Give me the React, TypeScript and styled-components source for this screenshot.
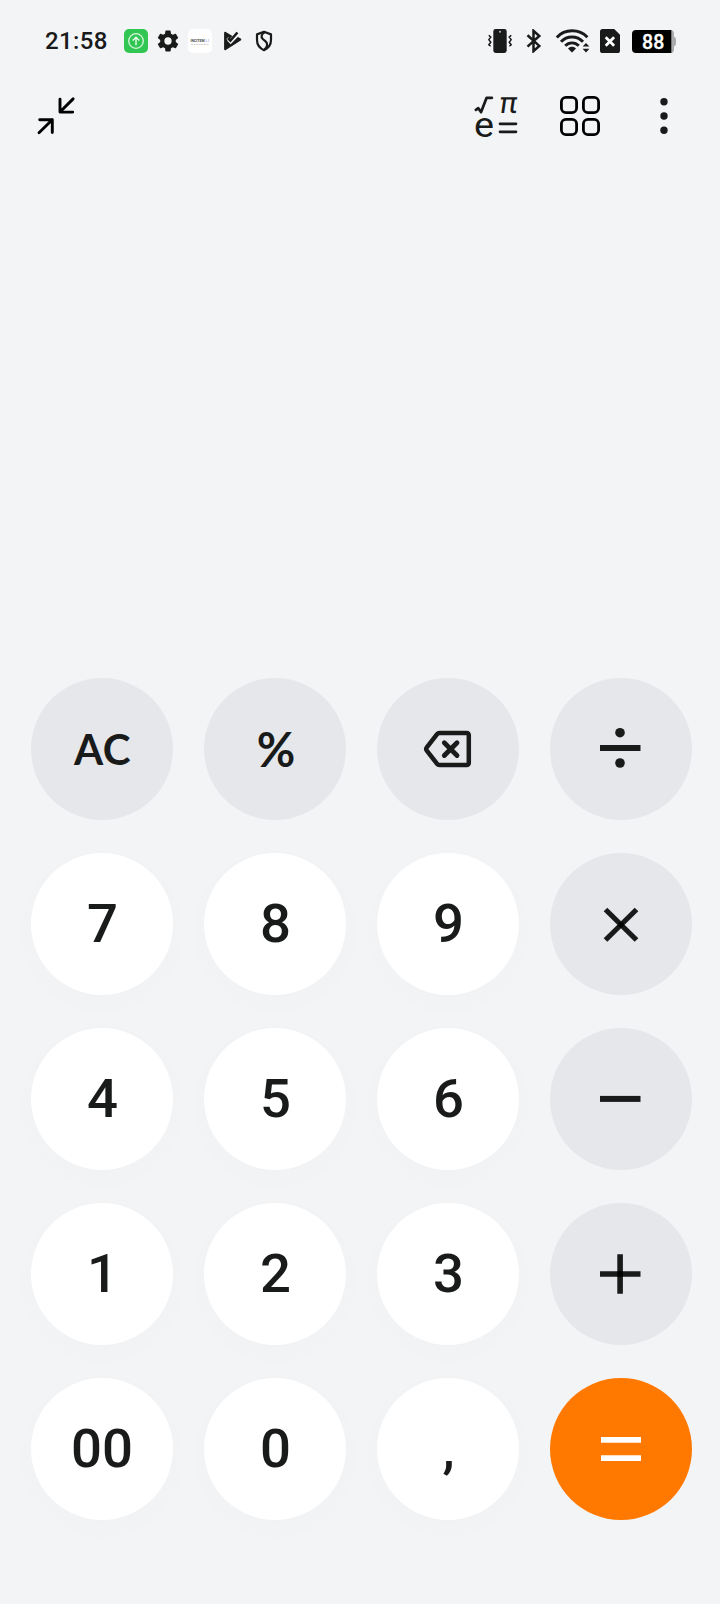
import React from 'react';
import styled, { createGlobalStyle } from 'styled-components';

const GlobalStyle = createGlobalStyle`
  * { box-sizing: border-box; }
  body { margin: 0; background: #f3f4f6; }
`;

const INK = '#191a1a';

const Screen = styled.main`
  display: flex;
  flex-direction: column;
  width: 720px;
  height: 1604px;
  background: #f3f4f6;
  font-family: Roboto, 'Liberation Sans', sans-serif;
  color: ${INK};
`;

const StatusBar = styled.header`
  display: flex;
  align-items: center;
  justify-content: space-between;
  height: 82px;
  padding: 0 44px 0 45px;
`;

const StatusGroup = styled.div`
  display: flex;
  align-items: center;
`;

const Clock = styled.time`
  width: 71px;
  font-size: 24px;
  line-height: 28px;
  font-weight: 500;
  letter-spacing: 0.4px;
`;

const Glyph = styled.svg`
  display: block;
  flex: none;
`;

const StatusIcon = styled(Glyph)<{ $before?: number }>`
  margin-left: ${(p) => p.$before ?? 0}px;
`;

const Toolbar = styled.nav`
  display: flex;
  align-items: center;
  height: 68px;
  padding: 0 40px 0 36px;
`;

const ToolButton = styled.button<{ $push?: boolean; $before?: number }>`
  margin: 0 0 0 ${(p) => (p.$push ? 'auto' : `${p.$before ?? 0}px`)};
  padding: 0;
  border: 0;
  background: none;
  color: inherit;
  font-family: inherit;
`;

const Display = styled.section`
  flex: 1;
`;

const Keypad = styled.section`
  display: grid;
  grid-template-columns: repeat(4, 142px);
  grid-auto-rows: 142px;
  gap: 33px 31px;
  padding: 0 28px 84px 31px;
`;

type Tone = 'digit' | 'operator' | 'accent';

const toneColor: Record<Tone, string> = {
  digit: '#ffffff',
  operator: '#e6e7eb',
  accent: '#ff7800',
};

const Key = styled.button<{ $tone: Tone }>`
  display: flex;
  align-items: center;
  justify-content: center;
  padding: 0;
  border: 0;
  border-radius: 50%;
  background: ${(p) => toneColor[p.$tone]};
  box-shadow: ${(p) => (p.$tone === 'digit' ? '0 8px 36px 4px rgba(0, 0, 0, 0.01)' : 'none')};
  color: ${(p) => (p.$tone === 'accent' ? '#ffffff' : INK)};
  font-family: inherit;
`;

const Digit = styled.span<{ $wide: boolean }>`
  font-size: 54.5px;
  line-height: 64px;
  font-weight: 500;
  padding: 0 0 2px ${(p) => (p.$wide ? 0 : 1)}px;
`;

const ClearLabel = styled.span`
  font-family: Lato, sans-serif;
  font-size: 42px;
  line-height: 50px;
  font-weight: 700;
  letter-spacing: 0.6px;
  padding-left: 1px;
`;

const PercentLabel = styled.span`
  font-family: Lato, sans-serif;
  font-size: 47px;
  line-height: 54px;
  font-weight: 700;
  padding: 0 0 1px 2px;
`;

const NotificationIcons = () => (
  <>
    <StatusIcon $before={8} width="24" height="24" viewBox="124 29 24 24">
      <rect x="124" y="29" width="24" height="24" rx="5" fill="#30c651" />
      <circle cx="136" cy="41" r="7.3" fill="none" stroke="#d9f7df" strokeWidth="1.3" />
      <path d="M136 45.2V37.5M132.7 40.4l3.3-3.2 3.3 3.2" fill="none" stroke="#e8fbec" strokeWidth="1.4" />
    </StatusIcon>
    <StatusIcon $before={8} width="24" height="24" viewBox="0.5 0.5 23 23">
      <path
        fill={INK}
        d="M19.43 12.98c.04-.32.07-.64.07-.98s-.03-.66-.07-.98l2.11-1.65c.19-.15.24-.42.12-.64l-2-3.46c-.12-.22-.39-.3-.61-.22l-2.49 1c-.52-.4-1.08-.73-1.69-.98l-.38-2.65C14.46 2.18 14.25 2 14 2h-4c-.25 0-.46.18-.49.42l-.38 2.65c-.61.25-1.17.59-1.69.98l-2.49-1c-.23-.09-.49 0-.61.22l-2 3.46c-.13.22-.07.49.12.64l2.11 1.65c-.04.32-.07.65-.07.98s.03.66.07.98l-2.11 1.65c-.19.15-.24.42-.12.64l2 3.46c.12.22.39.3.61.22l2.49-1c.52.4 1.08.73 1.69.98l.38 2.65c.03.24.24.42.49.42h4c.25 0 .46-.18.49-.42l.38-2.65c.61-.25 1.17-.59 1.69-.98l2.49 1c.23.09.49 0 .61-.22l2-3.46c.12-.22.07-.49-.12-.64l-2.11-1.65zM12 15.5a3.5 3.5 0 1 1 0-7 3.5 3.5 0 0 1 0 7z"
      />
    </StatusIcon>
    <StatusIcon $before={8} width="24" height="24" viewBox="188 29 24 24">
      <rect x="188" y="29" width="24" height="24" rx="5" fill="#fff" />
      <text x="190.5" y="42" fontSize="3.6" fontWeight="700" fill="#444" textLength="14" lengthAdjust="spacingAndGlyphs">INCITEM</text>
      <text x="205.5" y="42" fontSize="3.6" fill="#8b8fe0" textLength="3.6" lengthAdjust="spacingAndGlyphs">LI</text>
      <path d="M191 44.4h18" stroke="#cfcfd2" strokeWidth="1" strokeDasharray="2 .6" />
    </StatusIcon>
    <StatusIcon $before={8} width="24" height="24" viewBox="220 29 24 24">
      <path
        fill={INK}
        d="M224.8 31.8c.3-.1.7 0 1 .2l6.6 3.9-2.3 2.7-1.7-1.6-2 2 4.3 4.3 6.8-6.6 3.2 1.9c.8.5.8 1.5 0 2l-14.9 9.4c-.9.6-1.7.2-1.7-.9V32.9c0-.5.2-.9.7-1.1z"
      />
      <path d="M227.8 40l2.9 3 7.6-7.8" fill="none" stroke="#f3f4f6" strokeWidth="1.8" />
      <path d="M228 38l2.4 2.5 7-8" fill="none" stroke={INK} strokeWidth="2.6" />
    </StatusIcon>
    <StatusIcon $before={8} width="24" height="24" viewBox="252 29 24 24">
      <path
        d="M264 31.8l-7 2.6V40c0 4.8 2.7 8.200 7 10.200 4.300-2 7-5.400 7-10.200v-5.600z"
        fill="none"
        stroke={INK}
        strokeWidth="2.2"
        strokeLinejoin="round"
      />
      <path d="M264.8 32.300c-3.400 1.600-4.200 4.600-2 6.700l3 2.600c2.400 2.200 1.300 5.900-1.600 8" fill="none" stroke={INK} strokeWidth="2.2" />
    </StatusIcon>
  </>
);

const SystemIcons = () => (
  <>
    <StatusIcon width="24" height="24" viewBox="488 29 24 24">
      <rect x="493.3" y="29" width="13.4" height="24" rx="2.4" fill={INK} />
      <circle cx="500" cy="31.8" r="1" fill="#b8b9bb" />
      <path
        d="M488.8 35.2l2 1.9-2 2.5 2 2.6-2 2.5 1.8 1.6M511.2 35.2l-2 1.9 2 2.5-2 2.6 2 2.5-1.8 1.6"
        fill="none"
        stroke={INK}
        strokeWidth="1.5"
      />
    </StatusIcon>
    <StatusIcon $before={14} width="16" height="24" viewBox="526 29 16 24">
      <path d="M527.5 35.3l11.8 10.6-5.8 5.2V30.8l5.8 5.2-11.8 10.6" fill="none" stroke={INK} strokeWidth="2.5" />
    </StatusIcon>
    <StatusIcon $before={13} width="35" height="24" viewBox="555 29 35 24">
      <path d="M556.8 37.4c8-8.8 22.4-8.8 30.6-.2" fill="none" stroke={INK} strokeWidth="2.9" />
      <path d="M561 41.8c6-6.4 16-6.4 22 0" fill="none" stroke={INK} strokeWidth="2.9" />
      <path d="M565.2 45.8c3.8-4 9.8-4 13.6 0" fill="none" stroke={INK} strokeWidth="2.8" />
      <path d="M568 48.5c2-2.3 6-2.3 8 0l-3.4 3.6c-.4.4-.8.4-1.2 0z" fill={INK} />
      <path d="M582.6 46.6L586 43l3.4 3.6zM582.6 48.8h6.8L586 52.4z" fill={INK} />
    </StatusIcon>
    <StatusIcon $before={10} width="20" height="24" viewBox="600 29 20 24">
      <path d="M602.6 29h11.6l5.8 5.8v15.6a2.6 2.6 0 0 1-2.6 2.6h-14.8a2.6 2.6 0 0 1-2.6-2.6V31.6a2.6 2.6 0 0 1 2.6-2.6z" fill={INK} />
      <path d="M605.7 37.3l8.4 8.4m0-8.4l-8.4 8.4" stroke="#fff" strokeWidth="2.7" />
    </StatusIcon>
    <StatusIcon $before={12} width="44" height="24" viewBox="632 29 44 24">
      <path d="M669 30h1.500a3.500 3.500 0 0 1 3.500 3.500v3.200c1.500.4 2 1.500 2 3v3.600c0 1.500-.5 2.600-2 3v3.200a3.500 3.500 0 0 1-3.500 3.500H669z" fill="#aaabac" />
      <path d="M636 30h35.300v23H636a4 4 0 0 1-4-4V34a4 4 0 0 1 4-4z" fill="#000" />
      <text x="653.2" y="48.500" textAnchor="middle" fontSize="19.500" fontWeight="500" fill="#fff" stroke="#fff" strokeWidth=".3">88</text>
    </StatusIcon>
  </>
);

const CollapseIcon = () => (
  <Glyph width="40" height="40" viewBox="36 96 40 40">
    <path
      d="M73.1 98.9L60.2 111.8M60 99.3v12.8h12.7M39 132.7l13.3-12.9M39.7 119.8h12.6v12.7"
      fill="none"
      stroke="#000"
      strokeWidth="2.9"
      strokeLinecap="round"
      strokeLinejoin="round"
    />
  </Glyph>
);

const ScientificIcon = () => (
  <Glyph width="44" height="44" viewBox="474 94 44 44" overflow="visible">
    <g fill="none" stroke={INK} strokeWidth="2.7" strokeLinecap="round" strokeLinejoin="round">
      <path d="M475.9 109.9l2.4-1.7 2.800 3.900 5.500-14.300h5.300" />
      <path d="M500 123.800h16M500 131.800h16" />
    </g>
    <text
      transform="translate(498.2 112.7) skewX(-8)"
      fontSize="30"
      fontWeight="400"
      fill={INK}
      textLength="18"
      lengthAdjust="spacingAndGlyphs"
    >
      π
    </text>
    <text
      x="474"
      y="137"
      fontSize="35"
      fontWeight="400"
      fill={INK}
      textLength="20"
      lengthAdjust="spacingAndGlyphs"
    >
      e
    </text>
  </Glyph>
);

const GridIcon = () => (
  <Glyph width="40" height="40" viewBox="560 96 40 40">
    <g fill="none" stroke="#000" strokeWidth="2.8">
      {[561.4, 583.4].map((x) =>
        [97.4, 119.4].map((y) => <rect key={`${x}-${y}`} x={x} y={y} width="15.2" height="15.2" rx="4.6" />),
      )}
    </g>
  </Glyph>
);

const MoreIcon = () => (
  <Glyph width="32" height="40" viewBox="648 96 32 40">
    {[101.7, 116, 130.3].map((y) => (
      <circle key={y} cx="664" cy={y} r="3.7" fill={INK} />
    ))}
  </Glyph>
);

/* Operator drawings share a 60px box centred in the key. */
const OperatorIcon = ({ children }: { children: React.ReactNode }) => (
  <Glyph width="60" height="60" viewBox="-30 -30 60 60">
    {children}
  </Glyph>
);

const Backspace = () => (
  <OperatorIcon>
    <path
      d="M-8.5-16h27.3a2 2 0 0 1 2 2v28.1a2 2 0 0 1-2 2H-8.500a3 3 0 0 1-2.400-1.200L-21.200 1.600a2.600 2.600 0 0 1 0-3.200l10.300-13.200a3 3 0 0 1 2.400-1.200z"
      fill="none"
      stroke={INK}
      strokeWidth="4.5"
      strokeLinejoin="round"
    />
    <path d="M-3.7-6.2L9 6.5M9-6.2L-3.7 6.5" stroke={INK} strokeWidth="4.8" strokeLinecap="round" />
  </OperatorIcon>
);

const Divide = () => (
  <OperatorIcon>
    <rect x="-21" y="-4" width="40.5" height="6" fill={INK} />
    <circle cx="-1" cy="-16.3" r="4.8" fill={INK} />
    <circle cx="-1" cy="14" r="4.8" fill={INK} />
  </OperatorIcon>
);

const Multiply = () => (
  <OperatorIcon>
    <path d="M-15.5-14.5L15.5 16M15.5-14.5L-15.5 16" stroke={INK} strokeWidth="5.2" />
    <circle cx="0" cy=".7" r="2.8" fill="#000" />
  </OperatorIcon>
);

const Minus = () => (
  <OperatorIcon>
    <rect x="-21" y="-3.1" width="40.5" height="6" fill={INK} />
  </OperatorIcon>
);

const Plus = () => (
  <OperatorIcon>
    <path d="M-21 0h40.5M-.9-19.7v39.4" stroke={INK} strokeWidth="5.6" />
    <rect x="-3.7" y="-2.8" width="5.6" height="5.6" fill="#000" />
  </OperatorIcon>
);

const Equals = () => (
  <OperatorIcon>
    <path d="M-20-9.2h40M-20 9.2h40" stroke="#fff" strokeWidth="5.8" />
  </OperatorIcon>
);

type KeySpec = { id: string; tone: Tone; face: React.ReactNode };

const digit = (id: string): KeySpec => ({
  id,
  tone: 'digit',
  face: <Digit $wide={id.length > 1}>{id}</Digit>,
});
const operator = (id: string, face: React.ReactNode, tone: Tone = 'operator'): KeySpec => ({ id, tone, face });

const keys: KeySpec[] = [
  operator('clear', <ClearLabel>AC</ClearLabel>),
  operator('percent', <PercentLabel>%</PercentLabel>),
  operator('backspace', <Backspace />),
  operator('divide', <Divide />),
  digit('7'), digit('8'), digit('9'),
  operator('multiply', <Multiply />),
  digit('4'), digit('5'), digit('6'),
  operator('minus', <Minus />),
  digit('1'), digit('2'), digit('3'),
  operator('plus', <Plus />),
  digit('00'), digit('0'), digit(','),
  operator('equals', <Equals />, 'accent'),
];

export default function App() {
  return (
    <Screen>
      <GlobalStyle />
      <StatusBar>
        <StatusGroup>
          <Clock>21:58</Clock>
          <NotificationIcons />
        </StatusGroup>
        <StatusGroup>
          <SystemIcons />
        </StatusGroup>
      </StatusBar>
      <Toolbar>
        <ToolButton><CollapseIcon /></ToolButton>
        <ToolButton $push><ScientificIcon /></ToolButton>
        <ToolButton $before={42}><GridIcon /></ToolButton>
        <ToolButton $before={48}><MoreIcon /></ToolButton>
      </Toolbar>
      <Display />
      <Keypad>
        {keys.map((k) => (
          <Key key={k.id} $tone={k.tone}>{k.face}</Key>
        ))}
      </Keypad>
    </Screen>
  );
}
